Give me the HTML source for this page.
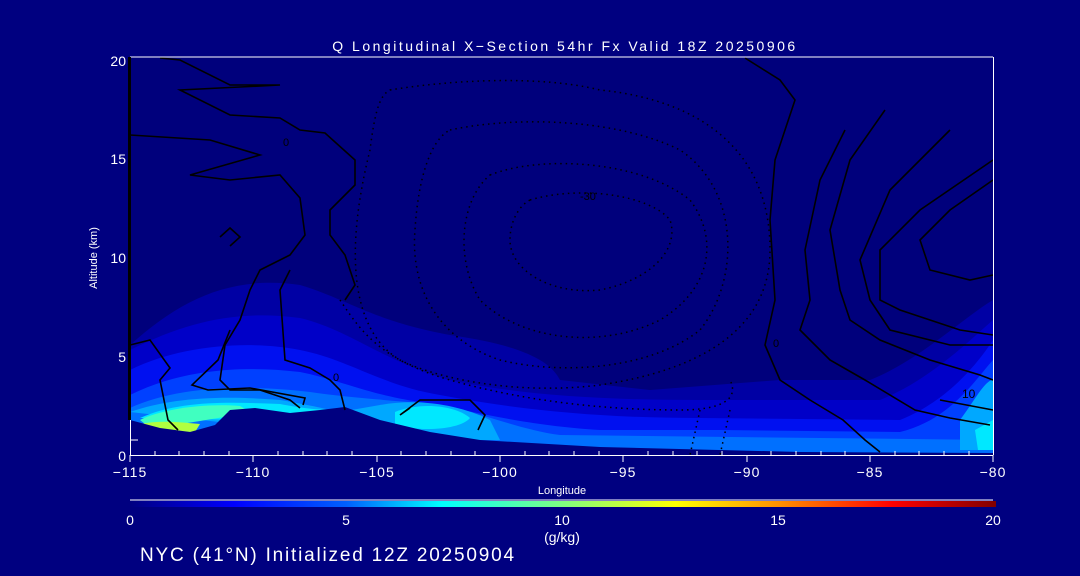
<!DOCTYPE html>
<html><head><meta charset="utf-8"><style>
html,body{margin:0;padding:0;background:#000080;width:1080px;height:576px;overflow:hidden}
svg{display:block}
text{font-family:"Liberation Sans",sans-serif;fill:#fff}
</style></head><body>
<svg width="1080" height="576" viewBox="0 0 1080 576" xmlns="http://www.w3.org/2000/svg">
<defs>
<linearGradient id="cb" x1="0" x2="1" y1="0" y2="0">
<stop offset="0" stop-color="#000080"/>
<stop offset="0.12" stop-color="#0000ff"/>
<stop offset="0.25" stop-color="#0060ff"/>
<stop offset="0.36" stop-color="#00ffff"/>
<stop offset="0.5" stop-color="#80ff80"/>
<stop offset="0.63" stop-color="#ffff00"/>
<stop offset="0.75" stop-color="#ff9000"/>
<stop offset="0.88" stop-color="#ff0000"/>
<stop offset="1" stop-color="#800000"/>
</linearGradient>
</defs>
<rect width="1080" height="576" fill="#000080"/>
<rect x="130" y="58" width="863" height="397" fill="#00007c"/>
<path d="M130,345 C180,300 230,275 300,285 C350,300 370,320 450,335 C520,345 550,360 560,380 L650,390 L780,380 L870,380 C920,360 960,320 993,300 L993,455 L130,455Z" fill="#0000a4"/>
<path d="M130,350 C190,320 240,310 300,318 C350,330 380,360 450,380 C520,395 600,400 700,400 L880,400 C930,380 970,340 993,320 L993,455 L130,455Z" fill="#0000c8"/>
<path d="M130,370 C180,345 250,340 300,350 C350,360 380,385 440,395 C520,410 600,418 700,418 L900,420 C950,400 980,360 993,340 L993,455 L130,455Z" fill="#0010f0"/>
<path d="M130,395 C180,370 240,365 300,372 C340,380 370,395 420,402 C470,410 520,425 600,430 L720,430 L900,432 C950,420 975,380 993,360 L993,455 L130,455Z" fill="#0040ff"/>
<path d="M130,408 C180,385 250,385 310,392 C350,398 390,400 440,405 C480,412 520,430 560,435 L993,440 L993,455 L130,455Z" fill="#0070ff"/>
<path d="M130,412 C170,398 220,395 280,400 C310,405 330,410 340,412 L380,405 C420,398 460,405 490,420 L500,440 L380,440Z M960,420 C975,400 985,380 993,380 L993,450 L960,450Z" fill="#00a8ff"/>
<path d="M140,418 C180,400 230,402 280,404 C300,408 320,410 330,410 L250,420Z M395,412 C420,402 455,405 470,418 C460,430 420,432 395,425Z M975,430 L993,420 L993,450 L978,450Z" fill="#00e8ff"/>
<path d="M140,420 C160,410 200,403 240,406 L250,412 C210,420 175,425 150,428Z" fill="#40ffc0"/>
<path d="M140,424 C160,420 180,422 200,424 L195,432 C175,432 155,430 140,428Z" fill="#b0ff40"/>
<path d="M130,420 L160,428 L190,432 L215,425 L230,410 L255,408 L290,413 L320,410 L345,407 L380,420 L430,432 L480,440 L600,447 L800,452 L993,453 L993,455 L130,455Z" fill="#000080"/>
<g fill="none" stroke="#000" stroke-width="1.6">
<polyline points="160,58 180,60 230,85 280,85 180,90 230,115 280,118 300,130 325,133 355,160 355,185 330,210 330,235 345,255 355,285 345,300"/>
<polyline points="130,135 210,140 260,155 190,175 230,180 280,175 300,198 305,235 290,255 260,270 250,290 240,320 225,345 220,380 230,390 260,390 290,400 300,408"/>
<polyline points="130,345 150,340 170,368 160,380 168,420 178,430"/>
<polyline points="230,330 218,360 192,385 208,390 250,388 305,398 303,405"/>
<polyline points="290,270 280,290 285,360 310,368 330,380 340,390 345,410"/>
<polyline points="220,237 230,228 240,237 230,246Z"/>
<polyline points="745,58 780,80 795,100 775,160 770,220 775,300 765,345 780,380 810,400 843,420 865,440 880,452"/>
<polyline points="845,130 820,180 805,250 810,300 800,330 830,360 865,380 915,410 950,418 990,425"/>
<polyline points="885,110 850,160 830,230 840,290 850,320 880,340 930,360 980,375 993,380"/>
<polyline points="950,130 890,190 860,260 870,300 890,330 950,345 993,345"/>
<polyline points="993,160 920,210 880,250 880,300 900,310 960,330 993,335"/>
<polyline points="993,180 950,210 920,240 930,270 970,280 993,275"/>
<polyline points="940,400 993,410"/>
<polyline points="410,408 400,415 420,400 470,400 485,415 478,430"/>
</g>
<g fill="none" stroke="#000" stroke-width="1.5" stroke-dasharray="1.5,4">
<path d="M390,90 C450,80 540,75 600,90 C700,100 770,150 770,250 C770,330 700,370 600,385 C520,395 440,380 400,360 C350,330 345,250 370,150 C375,110 380,95 390,90Z"/>
<path d="M450,130 C520,115 620,120 680,150 C740,190 740,280 700,330 C650,370 560,375 500,360 C440,340 410,290 415,230 C418,180 430,140 450,130Z"/>
<path d="M490,175 C540,155 640,160 690,200 C720,240 710,290 660,320 C600,350 520,340 480,300 C455,260 460,200 490,175Z"/>
<path d="M530,200 C580,185 650,195 670,220 C680,250 650,280 600,290 C550,295 510,270 510,240 C510,220 520,205 530,200Z"/>
<path d="M340,300 C360,330 380,360 450,380 C520,400 600,410 680,410 C720,410 740,400 730,380"/>
<path d="M730,410 L720,455 M700,410 L690,455"/>
</g>
<g font-size="11">
<text x="283" y="146" style="fill:#000">0</text>
<text x="333" y="381" style="fill:#000">0</text>
<text x="773" y="347" style="fill:#000">0</text>
<text x="962" y="398" style="fill:#000;font-size:12px">10</text>
<text x="580" y="200" style="fill:#000">-30</text>
</g>
<line x1="130" y1="57" x2="993" y2="57" stroke="#fff"/>
<line x1="993.5" y1="57" x2="993.5" y2="455" stroke="#fff"/>
<line x1="130" y1="455.5" x2="993" y2="455.5" stroke="#fff"/>
<line x1="129.5" y1="57" x2="129.5" y2="420" stroke="#000" stroke-width="3"/>
<line x1="130.5" y1="420" x2="130.5" y2="455" stroke="#fff"/>
<g stroke="#fff">
<path d="M130,455v7M155,455v-4M179,455v-4M204,455v-4M229,455v-4M253,455v7M278,455v-4M303,455v-4M327,455v-4M352,455v-4M377,455v7M401,455v-4M426,455v-4M451,455v-4M475,455v-4M500,455v7M525,455v-4M549,455v-4M574,455v-4M599,455v-4M623,455v7M648,455v-4M673,455v-4M697,455v-4M722,455v-4M747,455v7M771,455v-4M796,455v-4M821,455v-4M845,455v-4M870,455v7M895,455v-4M919,455v-4M944,455v-4M969,455v-4M993,455v7"/>
<path d="M130,440h8"/>
</g>
<g font-size="14" text-anchor="middle" letter-spacing="1">
<text x="130" y="477">−115</text><text x="253" y="477">−110</text><text x="377" y="477">−105</text>
<text x="500" y="477">−100</text><text x="623" y="477">−95</text><text x="747" y="477">−90</text>
<text x="870" y="477">−85</text><text x="993" y="477">−80</text>
</g>
<g font-size="14" text-anchor="end">
<text x="126" y="66">20</text><text x="126" y="164">15</text><text x="126" y="263">10</text>
<text x="126" y="362">5</text><text x="126" y="461">0</text>
</g>
<text x="97" y="258" font-size="11" text-anchor="middle" transform="rotate(-90 97 258)">Altitude (km)</text>
<text x="562" y="494" font-size="11" text-anchor="middle">Longitude</text>
<text x="565" y="51" font-size="14" text-anchor="middle" letter-spacing="2.5">Q Longitudinal X−Section 54hr  Fx Valid 18Z 20250906</text>
<line x1="130" y1="500" x2="993" y2="500" stroke="#fff"/>
<rect x="130" y="501" width="866" height="6" fill="url(#cb)"/>
<g font-size="14" text-anchor="middle">
<text x="130" y="525">0</text><text x="346" y="525">5</text><text x="562" y="525">10</text>
<text x="778" y="525">15</text><text x="993" y="525">20</text>
<text x="562" y="542">(g/kg)</text>
</g>
<text x="140" y="561" font-size="19" letter-spacing="1.8">NYC (41°N) Initialized 12Z 20250904</text>
</svg>
</body></html>
